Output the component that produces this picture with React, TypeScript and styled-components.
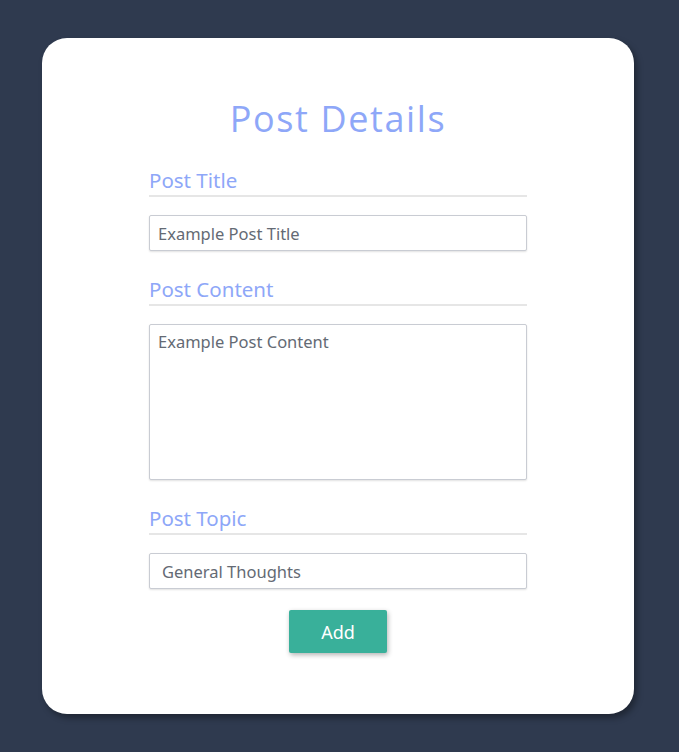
import React from "react";
import styled, { createGlobalStyle } from "styled-components";

const Global = createGlobalStyle`
  html, body { margin: 0; padding: 0; background: #2f3a4f; }
  body { font-family: "Noto Sans", "Open Sans", sans-serif; }
`;

const Page = styled.div`
  padding: 38px 45px 38px 42px;
`;

const Card = styled.div`
  width: 592px;
  height: 676px;
  box-sizing: border-box;
  background: #ffffff;
  border-radius: 25px;
  box-shadow: 3px 4px 6px rgba(0, 0, 0, 0.35);
  padding: 57px 0 0 107px;
`;

const Form = styled.form`
  width: 378px;
  display: flex;
  flex-direction: column;
`;

const Title = styled.h1`
  margin: 0 0 24px;
  text-align: center;
  font-family: "Open Sans", sans-serif;
  font-weight: 400;
  font-size: 36px;
  line-height: 48px;
  color: #8ea7f8;
  letter-spacing: 1.6px;
`;

const Label = styled.label`
  display: block;
  font-size: 20.5px;
  line-height: 26px;
  color: #8ea7f8;
  padding-bottom: 2px;
  border-bottom: 2px solid #e6e6e6;
  margin-bottom: 18px;
`;

const fieldBase = `
  box-sizing: border-box;
  width: 378px;
  border: 1px solid #c9ccd3;
  border-radius: 2px;
  box-shadow: 0 1px 2px rgba(0,0,0,0.12);
  font-family: "Noto Sans", sans-serif;
  font-size: 16.5px;
  color: #646a74;
  background: #fff;
  outline: none;
`;

const Input = styled.input`
  ${fieldBase}
  height: 36px;
  padding: 0 8px;
  margin-bottom: 25px;
`;

const TextArea = styled.textarea`
  ${fieldBase}
  height: 156px;
  padding: 6px 8px;
  resize: none;
  margin-bottom: 25px;
  line-height: 22px;
`;

const Select = styled.div`
  ${fieldBase}
  height: 36px;
  padding: 0 12px;
  display: flex;
  align-items: center;
`;

const Button = styled.button`
  align-self: center;
  margin-top: 21px;
  width: 98px;
  height: 43px;
  border: none;
  border-radius: 2px;
  background: #39b09a;
  color: #ffffff;
  font-family: "Noto Sans", sans-serif;
  font-size: 18px;
  box-shadow: 1px 2px 5px rgba(0, 0, 0, 0.3);
`;

export default function App() {
  return (
    <>
      <Global />
      <Page>
        <Card>
          <Form onSubmit={(e) => e.preventDefault()}>
            <Title>Post Details</Title>
            <Label>Post Title</Label>
            <Input defaultValue="Example Post Title" />
            <Label>Post Content</Label>
            <TextArea defaultValue="Example Post Content" />
            <Label>Post Topic</Label>
            <Select>General Thoughts</Select>
            <Button type="submit">Add</Button>
          </Form>
        </Card>
      </Page>
    </>
  );
}
